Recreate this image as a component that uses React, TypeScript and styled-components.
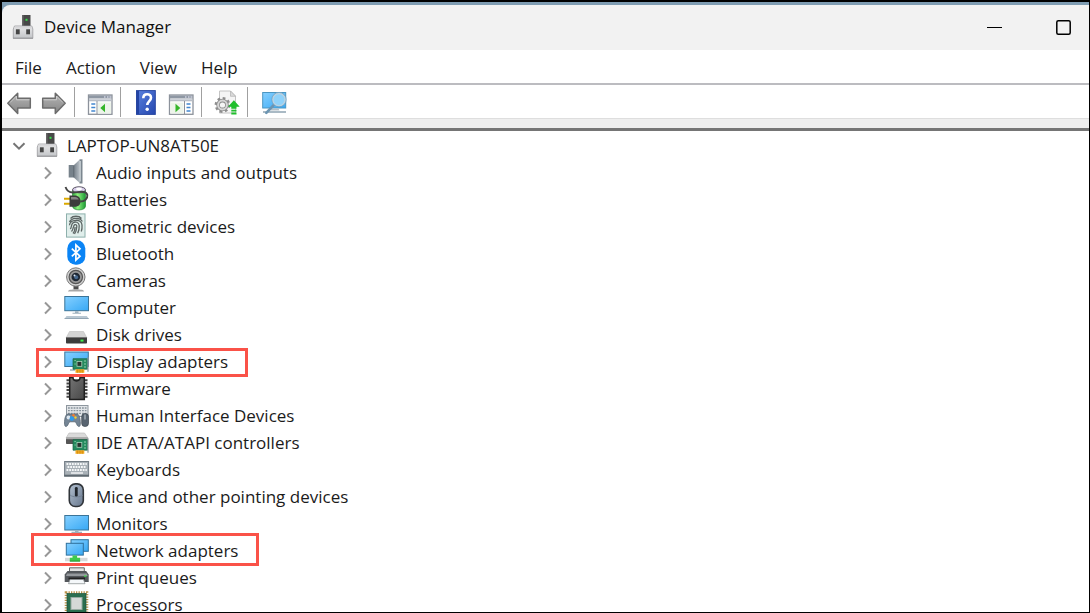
import React from 'react';
import styled, { createGlobalStyle } from 'styled-components';

const GlobalStyle = createGlobalStyle`
  *, *::before, *::after { box-sizing: border-box; }
  body { margin: 0; background: #000; }
  button { font: inherit; color: inherit; background: none; border: 0; padding: 0; }
`;

const Frame = styled.div`
  display: flex;
  flex-direction: column;
  height: 100vh;
  overflow: hidden;
  border: solid #000;
  border-width: 2px 1px 1px 2px;
  background: #7f9db3;
  padding-top: 3px;
  font-family: 'Open Sans', 'Noto Sans', sans-serif;
  font-size: 17px;
  line-height: 27px;
  color: #1b1b1b;
`;

const TitleBar = styled.header`
  display: flex;
  align-items: center;
  flex: none;
  height: 45px;
  padding-left: 8px;
  background: #f2f2f2;
  border-top-left-radius: 8px;
`;

const Title = styled.h1`
  flex: 1;
  margin: 0 0 2px 6px;
  font-size: 17px;
  font-weight: 400;
  line-height: 27px;
  color: #111;
`;

const WindowControls = styled.div`
  display: flex;
  gap: 19px;
`;

const WindowButton = styled.button`
  display: grid;
  place-items: center;
  width: 50px;
  height: 44px;
`;

const MenuBar = styled.nav`
  display: flex;
  flex: none;
  height: 33px;
  padding: 2px 1px 0;
  background: #fff;
`;

const MenuItem = styled.button`
  padding: 0 12px;
  height: 31px;
`;

const ToolBar = styled.div`
  display: flex;
  flex: none;
  gap: 1px;
  height: 35px;
  border-top: 2px solid #bcbcc0;
  background: #fff;
`;

const ToolButton = styled.button`
  display: grid;
  place-items: center;
  width: 34px;
  height: 33px;
`;

const Separator = styled.span`
  width: 1px;
  height: 30px;
  margin: 2px 7px 0 2px;
  background: #a0a0a0;
`;

const Rail = styled.div`
  flex: none;
  height: 13px;
  background: #eee;
  border-top: 1px solid #dedede;
  border-bottom: 3px solid #757575;
`;

const TreePane = styled.main`
  flex: 1;
  min-height: 0;
  overflow: hidden;
  padding-top: 1px;
  background: #fff;
`;

const Tree = styled.ul`
  list-style: none;
  margin: 0;
  padding: 0;
`;

const Row = styled.div<{ $level: number }>`
  position: relative;
  display: flex;
  height: 27px;
  padding-left: ${({ $level }) => 9 + $level * 29}px;
`;

const Expander = styled.button`
  display: grid;
  place-items: center;
  width: 16px;
  height: 28px;
  margin-right: 7px;
`;

const Label = styled.span`
  margin-left: 5px;
  white-space: nowrap;
`;

type Box = { left: number; top: number; width: number; height: number };

const Highlight = styled.span<{ $box: Box }>`
  position: absolute;
  left: ${({ $box }) => $box.left}px;
  top: ${({ $box }) => $box.top}px;
  width: ${({ $box }) => $box.width}px;
  height: ${({ $box }) => $box.height}px;
  border: 3px solid #fa5248;
  pointer-events: none;
  z-index: 1;
`;

const IconSvg = styled.svg`
  display: block;
  flex: none;
`;

const RowIcon = ({ children }: { children: React.ReactNode }) => (
  <IconSvg width="28" height="27" viewBox="0 0 28 27" aria-hidden="true">{children}</IconSvg>
);

const ToolIcon = ({ children }: { children: React.ReactNode }) => (
  <IconSvg width="28" height="33" viewBox="0 0 28 33" aria-hidden="true">{children}</IconSvg>
);

const Gradients = () => (
  <IconSvg width="0" height="0" aria-hidden="true">
    <defs>
      <linearGradient id="screen" x1="0" y1="0" x2="1" y2="1">
        <stop offset="0" stopColor="#86d0ff" /><stop offset="1" stopColor="#36a8f5" />
      </linearGradient>
      <linearGradient id="metal" x1="0" y1="0" x2="0" y2="1">
        <stop offset="0" stopColor="#e9e9ea" /><stop offset="1" stopColor="#c3c5c8" />
      </linearGradient>
      <linearGradient id="arrow" x1="0" y1="0" x2="0" y2="1">
        <stop offset="0" stopColor="#b5b5b5" /><stop offset="1" stopColor="#858585" />
      </linearGradient>
      <linearGradient id="cone" x1="0" y1="0" x2="1" y2="0">
        <stop offset="0" stopColor="#737d86" /><stop offset="1" stopColor="#b5bdc4" />
      </linearGradient>
      <linearGradient id="cell" x1="0" y1="0" x2="1" y2="0">
        <stop offset="0" stopColor="#2da83c" /><stop offset=".4" stopColor="#8ff07f" /><stop offset="1" stopColor="#1c9c34" />
      </linearGradient>
      <linearGradient id="help" x1="0" y1="0" x2="1" y2="1">
        <stop offset="0" stopColor="#5b82e0" /><stop offset="1" stopColor="#2446ae" />
      </linearGradient>
      <linearGradient id="mouse" x1="0" y1="0" x2="1" y2="1">
        <stop offset="0" stopColor="#b4c2d2" /><stop offset="1" stopColor="#66768c" />
      </linearGradient>
      <linearGradient id="chip" x1="0" y1="0" x2="1" y2="1">
        <stop offset="0" stopColor="#747474" /><stop offset="1" stopColor="#484848" />
      </linearGradient>
    </defs>
  </IconSvg>
);

const DeviceIcon = () => (
  <RowIcon>
    <rect x="12" y="1" width="8.500" height="11.500" fill="#484848" />
    <rect x="12" y="1" width="1.500" height="11.500" fill="#666" />
    <rect x="15.500" y="4.800" width="2" height="2" fill="#37e04a" />
    <path d="M4.500 12h17.300l1 3v9.300H3.300V15z" fill="url(#metal)" stroke="#9b9b9e" strokeWidth=".8" />
    <path d="M4.800 12.400h16.600l.8 2H3.900z" fill="#d8d8da" />
    <rect x="5.900" y="15.300" width="3.800" height="5" fill="#464646" />
    <rect x="16.200" y="15.300" width="3.800" height="5" fill="#464646" />
    <path d="M3 23.700h20v1H3z" fill="#98989b" />
  </RowIcon>
);

const AudioIcon = () => (
  <RowIcon>
    <rect x="5.700" y="6" width="5" height="12.500" fill="#77828b" />
    <path d="M10.500 6.500 16.500.8v23l-6-5.600z" fill="url(#cone)" />
    <path d="M16.500.3h3v24.200h-3z" fill="#7b868f" />
    <path d="M16.300 2h1.600v20.500h-1.600z" fill="#c5ccd1" />
    <path d="M10.700 6.500v11.800" stroke="#525e67" strokeWidth=".8" />
  </RowIcon>
);

const BatteryIcon = () => (
  <RowIcon>
    <path d="M9.500 4.500v15.500c0 5.200 13 5.200 13 0v-15.500z" fill="url(#cell)" stroke="#258a35" strokeWidth=".7" />
    <ellipse cx="16" cy="3.800" rx="6.500" ry="3" fill="#d7ccea" stroke="#55505e" />
    <ellipse cx="16" cy="3" rx="3" ry="1.400" fill="#fff" />
    <path d="M2.500 1c1.500 4.300 3.500 5.800 8 5.500 5-.3 13-2.500 13.800 2.500.5 4-2.800 6.500-7 6.500" fill="none" stroke="#444" strokeWidth="1.900" />
    <path d="M1 12.700h6.500M1 17.800h6.500" stroke="#dca900" strokeWidth="2" />
    <path d="M6.500 9.500h5c4 0 6 2.400 6 5.700s-2 5.500-6 5.500h-5z" fill="#3c3c3c" />
    <path d="M8 11h4c2 0 3.200 1 3.700 2.500H8z" fill="#858585" />
  </RowIcon>
);

const BiometricIcon = () => (
  <RowIcon>
    <rect x="3.500" y=".9" width="18.500" height="23.200" fill="#e0eeeb" stroke="#8db0ac" />
    <g fill="none" stroke="#5d6665" strokeWidth="1.300">
      <path d="M7.500 5.500c2.500-3 8.500-3 11 0M6.500 9c2-4.500 10.500-5 12.800-.5M6.500 12.300c.5-6.300 12-7 12.500-.3.200 2.800 0 4.500-.7 6.500" />
      <path d="M7.300 16c1.500-2 .8-4.500 2.500-6 2.300-2 6.200-.8 6.400 2.500.2 3-.3 5.300-1.500 7.800" />
      <path d="M8.500 18.500c2.300-2.500 1.500-6 3.300-6.800 1.400-.5 2.100.6 2 2-.2 3-.8 5-2.300 7.300M10 20.500c1.500-1.700 2-4 2.100-6.500" />
    </g>
  </RowIcon>
);

const BluetoothIcon = () => (
  <RowIcon>
    <rect x="4.300" y=".3" width="18" height="24.400" rx="8.300" fill="#0a84f5" />
    <path d="m8.800 8.600 8.200 7.600-4.100 3.900V4.900L17 8.800l-8.200 7.600" fill="none" stroke="#fff" strokeWidth="1.700" />
  </RowIcon>
);

const CameraIcon = () => (
  <RowIcon>
    <path d="M10.500 19h5v3.500h-5z" fill="#4d4d4d" />
    <path d="M5 24.500c0-1.800 3-2 8-2s8 .2 8 2z" fill="#a8a8a8" />
    <circle cx="12.800" cy="10" r="9.200" fill="#d2d2d2" stroke="#777" />
    <circle cx="12.800" cy="10" r="6.700" fill="#9a9a9a" stroke="#565656" strokeWidth="1.200" />
    <circle cx="12.800" cy="10" r="4.300" fill="#1e2733" />
    <circle cx="13.200" cy="10.200" r="2" fill="#47698f" />
    <circle cx="11.500" cy="8.500" r="1" fill="#dceaf7" />
  </RowIcon>
);

const ComputerIcon = () => (
  <RowIcon>
    <rect x="1.800" y="2.500" width="23.700" height="14.200" fill="url(#screen)" stroke="#3b7498" />
    <path d="M12 17.200h3.500v1.500H18v1H9.500v-1H12z" fill="#9fb1bd" />
    <path d="M3.500 22h20.300l1.700 2.500H1.800z" fill="#b9c8d3" />
    <path d="M1.500 24h24.200v.9H1.500z" fill="#8ba0af" />
  </RowIcon>
);

const DiskIcon = () => (
  <RowIcon>
    <path d="M6.500 10.500h14l3.500 6.500H3z" fill="#d4d4d4" stroke="#bdbdbd" strokeWidth=".6" />
    <rect x="3" y="16" width="21" height="6.500" rx=".8" fill="#3c3c3c" />
    <path d="M3 16h21v1H3z" fill="#777" />
    <rect x="17.500" y="18.600" width="3" height="2" fill="#3df04d" />
  </RowIcon>
);

const Board = () => (
  <>
    <path d="M10 10.700h14.500v10.500H10z" fill="#25895e" stroke="#146544" strokeWidth=".7" />
    <path d="M25 9.300v14.500" stroke="#8d979c" strokeWidth="1.200" />
    <rect x="14" y="13.500" width="4.800" height="4.800" fill="#26342e" stroke="#a9d3ba" strokeWidth=".8" />
    <path d="M11.500 12.500h1.200M11.500 16h1.200M21 13h2M21 16h2M21 19h2" stroke="#8fd0ac" />
    <path d="M12.500 21.300h8.800v3.500h-8.800z" fill="#f2a81e" />
    <path d="M14.600 21.500v3.300M17 21.500v3.300M19.300 21.500v3.300" stroke="#c98510" strokeWidth=".7" />
  </>
);

const DisplayIcon = () => (
  <RowIcon>
    <rect x="1.800" y="4" width="23.500" height="14.500" fill="url(#screen)" stroke="#3b7498" />
    <path d="M7 22h5" stroke="#9fb1bd" strokeWidth="1.500" />
    <Board />
  </RowIcon>
);

const FirmwareIcon = () => (
  <RowIcon>
    <path d="M3.500 5.200h21M3.500 8.500h21M3.500 11.800h21M3.500 15.100h21M3.500 18.400h21M3.500 21.700h21" stroke="#444" strokeWidth="2" />
    <path d="M6.700 2.500H10c0 4.500 7 4.500 7 0h4.300v22H6.700z" fill="url(#chip)" stroke="#202020" strokeWidth="1.500" />
  </RowIcon>
);

const HidIcon = () => (
  <RowIcon>
    <rect x="3.500" y="3.500" width="21.500" height="11" fill="#e2e5e8" stroke="#8d969e" />
    <path d="M5 6h18.500M5 8.700h18.500M5 11.400h18.500" stroke="#87929b" strokeWidth="1.300" strokeDasharray="1.800 1" />
    <path d="M5 12c-3 0-3.800 7-3.400 10.500.3 3 2.500 2.500 3.600-.2.800-1.800 1-2.500 2.500-2.500h3.500c1.500 0 1.700.7 2.500 2.500 1.200 2.700 3.300 3.200 3.600.2.300-3.500-.5-10.500-3.500-10.500z" fill="#758595" stroke="#4f5d6a" strokeWidth=".7" />
    <circle cx="5.500" cy="15.500" r="1.900" fill="#dde6ee" />
    <circle cx="10.500" cy="13.500" r="1.400" fill="#ef7c31" />
    <circle cx="12.500" cy="15.500" r="1.200" fill="#f3cf32" />
    <circle cx="8.800" cy="16.500" r="2.200" fill="#2b9cf0" />
    <rect x="18.700" y="11.500" width="6.800" height="13" rx="3.200" fill="#596571" stroke="#3c464f" strokeWidth=".7" />
    <path d="M22 12.500v5" stroke="#c8d1d8" />
  </RowIcon>
);

const IdeIcon = () => (
  <RowIcon>
    <path d="M6 4h15.500l3.500 5H3z" fill="#dadada" stroke="#b7b7b7" strokeWidth=".6" />
    <rect x="3" y="8.700" width="22" height="6.300" rx=".8" fill="#555" />
    <path d="M3 8.700h22v1.500H3z" fill="#a8a8a8" />
    <Board />
  </RowIcon>
);

const KeyboardIcon = () => (
  <RowIcon>
    <rect x="1.600" y="5.500" width="24" height="14.500" fill="#a9b1b7" stroke="#727c84" />
    <path d="M3.500 8h20.300M4.500 11h18.500M3.500 14h20.300" stroke="#f5f7f8" strokeWidth="1.800" strokeDasharray="1.800 .9" />
    <path d="M8 17h12" stroke="#f5f7f8" strokeWidth="1.400" />
    <path d="M1.200 18.700h24.800v1.900H1.200z" fill="#5f6971" />
  </RowIcon>
);

const MouseIcon = () => (
  <RowIcon>
    <rect x="6.300" y=".9" width="14" height="22.600" rx="6" fill="url(#mouse)" stroke="#303439" strokeWidth="1.600" />
    <path d="M7 12c3 2.500 10 2.500 13 0" fill="none" stroke="#6e7c8e" strokeWidth=".8" />
    <rect x="11.900" y="4" width="2.800" height="9.500" rx="1.300" fill="#20252b" />
  </RowIcon>
);

const MonitorIcon = () => (
  <RowIcon>
    <rect x="1.800" y="5.500" width="23.700" height="14.500" fill="url(#screen)" stroke="#3b7498" />
    <path d="M12 20.500h3.500v1.300H19V23H8.500v-1.200H12z" fill="#9fb1bd" />
  </RowIcon>
);

const NetworkIcon = () => (
  <RowIcon>
    <rect x="8" y="2.700" width="17.300" height="11.600" fill="url(#screen)" stroke="#2f709b" />
    <path d="M18 15v3" stroke="#9fb1bd" strokeWidth="2" />
    <rect x="3.300" y="6.300" width="17" height="11.800" fill="url(#screen)" stroke="#2f709b" />
    <path d="M2 20.800h22.500v3.500H2z" fill="#d6d9db" />
    <path d="M9.500 18.600h4.600v2.200h3v3.500H6.800v-3.500h2.700z" fill="#3fcb4d" />
    <path d="M6.800 23.600h10.300v1H6.800z" fill="#269534" />
  </RowIcon>
);

const PrinterIcon = () => (
  <RowIcon>
    <path d="M6.500 3.800h14.800v5H6.500z" fill="#e2e2e2" stroke="#666" />
    <path d="M4.500 7h18.700l2.500 3.500V18h-24v-7.500z" fill="#53575b" />
    <path d="M4 9.500h19.700l1 2.500H3z" fill="#94989c" />
    <path d="M5.500 13.500H22v2H5.500z" fill="#222" />
    <path d="M7 15.500h13.500L22 19.700H5.500z" fill="#f5f8fa" stroke="#84898d" strokeWidth=".7" />
    <rect x="21" y="11.500" width="2.500" height="1.200" fill="#3ce24b" />
  </RowIcon>
);

const ProcessorIcon = () => (
  <RowIcon>
    <rect x="3" y="1.500" width="21" height="22" fill="none" stroke="#b9924a" strokeWidth="2.600" strokeDasharray="1.300 1.200" />
    <rect x="4" y="2.500" width="19" height="20" fill="#2a6e4f" stroke="#1c543b" strokeWidth=".7" />
    <rect x="8" y="6.500" width="11" height="12" fill="#d5d9d7" stroke="#97aba1" />
  </RowIcon>
);

const BackIcon = () => (
  <ToolIcon>
    <path d="M2.800 18.300 12.700 8.300v5h12.600v9.700H12.700v5.400z" fill="url(#arrow)" stroke="#6c6c6c" strokeWidth="1.500" strokeLinejoin="round" />
    <path d="m5 17.500 6.500-6.500v3.800h13" fill="none" stroke="#d0d0d0" strokeWidth=".9" />
  </ToolIcon>
);

const ForwardIcon = () => (
  <ToolIcon>
    <path d="M25.200 18.300 15.300 8.300v5H2.700v9.700h12.600v5.400z" fill="url(#arrow)" stroke="#6c6c6c" strokeWidth="1.500" strokeLinejoin="round" />
    <path d="M3.500 14.800h13V11l6.500 6.500" fill="none" stroke="#d0d0d0" strokeWidth=".9" />
  </ToolIcon>
);

const PaneIcon = ({ side }: { side: 'left' | 'right' }) => (
  <ToolIcon>
    <rect x="2.500" y="10" width="23.500" height="19.300" fill="#fff" stroke="#8c929b" strokeWidth="1.300" />
    <path d="M3 10.500h22.500v3H3z" fill="#8e97a3" />
    <path d="M18 12h1.500M21 12h1.500M23.500 12H25" stroke="#eef" strokeWidth="1.200" />
    <path d="M3 15.300h22.500" stroke="#b8bec7" strokeWidth="2" />
    {side === 'left' ? (
      <>
        <path d="M11 16v13" stroke="#8c929b" />
        <path d="M5.300 19h4M5.300 22.500h4M5.300 26h4" stroke="#4187cf" strokeWidth="1.500" />
        <rect x="12" y="17.500" width="13" height="11" fill="#edf4ea" />
        <path d="M19 18.800v8.400L14.300 23z" fill="#35b52a" />
      </>
    ) : (
      <>
        <path d="M17.500 16v13" stroke="#8c929b" />
        <path d="M19.500 19h4M19.500 22.500h4M19.500 26h4" stroke="#4187cf" strokeWidth="1.500" />
        <rect x="3.500" y="17.500" width="13" height="11" fill="#edf4ea" />
        <path d="M8.500 18.800v8.400L13.300 23z" fill="#35b52a" />
      </>
    )}
  </ToolIcon>
);

const HelpIcon = () => (
  <ToolIcon>
    <rect x="4.500" y="5.600" width="18.800" height="23.800" fill="url(#help)" stroke="#2847a2" />
    <path d="M5 6h2v23H5z" fill="#2344a4" />
    <path d="M11.300 13.300c0-5.600 7.700-5.100 7.700-.6 0 3.300-3.700 3.500-3.700 7.400" fill="none" stroke="#fff" strokeWidth="2.600" />
    <circle cx="15.200" cy="24.200" r="1.700" fill="#fff" />
  </ToolIcon>
);

const UpdateIcon = () => (
  <ToolIcon>
    <path d="M6.500 6h11l5 5v17H6.500z" fill="#f5f5f5" stroke="#c4c4c4" />
    <path d="M17.500 6v5.300h5z" fill="#dadada" stroke="#b1b1b1" strokeWidth=".7" />
    <circle cx="9.500" cy="20" r="6.700" fill="none" stroke="#8d8d8d" strokeWidth="2.400" strokeDasharray="2.700 2.560" />
    <circle cx="9.500" cy="20" r="4.400" fill="#f5f5f5" stroke="#8d8d8d" strokeWidth="3.600" />
    <circle cx="9.500" cy="20" r="4.400" fill="none" stroke="#d6d6d6" strokeWidth="2" />
    <path d="m20.900 15.200 5.800 6.500h-3.200v2h-5.200v-2H15z" fill="#20bf2d" />
    <path d="M18.300 24.700h5.200v1.800h-5.200zM18.300 27.600h5.200v1.800h-5.200z" fill="#20bf2d" />
  </ToolIcon>
);

const ScanIcon = () => (
  <ToolIcon>
    <rect x="3.700" y="7.500" width="23" height="15.500" fill="url(#screen)" stroke="#4a96c2" />
    <path d="M12.500 23.500h7l1 2h-9z" fill="#b4c0c8" />
    <path d="M4 27h23" stroke="#8ea3b2" strokeWidth="1.500" />
    <path d="m15.300 19.500-8 8.300" stroke="#6c95b2" strokeWidth="2.600" strokeLinecap="round" />
    <circle cx="20" cy="14.600" r="6.300" fill="#8fd2fa" stroke="#b9d3e3" strokeWidth="1.900" />
    <circle cx="20" cy="14.600" r="7.200" fill="none" stroke="#5f93b5" strokeWidth=".6" />
  </ToolIcon>
);

const Chevron = ({ open }: { open?: boolean }) => (
  <IconSvg width="14" height="14" viewBox="0 0 14 14" fill="none" stroke={open ? '#757575' : '#979797'} strokeWidth="2" aria-hidden="true">
    <path d={open ? 'M1.500 4.200L7 9.700l5.500-5.500' : 'M4 1.500L9.500 7 4 12.500'} />
  </IconSvg>
);

type Category = { name: string; Icon: React.FC; box?: Box };

const categories: Category[] = [
  { name: 'Audio inputs and outputs', Icon: AudioIcon },
  { name: 'Batteries', Icon: BatteryIcon },
  { name: 'Biometric devices', Icon: BiometricIcon },
  { name: 'Bluetooth', Icon: BluetoothIcon },
  { name: 'Cameras', Icon: CameraIcon },
  { name: 'Computer', Icon: ComputerIcon },
  { name: 'Disk drives', Icon: DiskIcon },
  { name: 'Display adapters', Icon: DisplayIcon, box: { left: 34, top: 0, width: 212, height: 29 } },
  { name: 'Firmware', Icon: FirmwareIcon },
  { name: 'Human Interface Devices', Icon: HidIcon },
  { name: 'IDE ATA/ATAPI controllers', Icon: IdeIcon },
  { name: 'Keyboards', Icon: KeyboardIcon },
  { name: 'Mice and other pointing devices', Icon: MouseIcon },
  { name: 'Monitors', Icon: MonitorIcon },
  { name: 'Network adapters', Icon: NetworkIcon, box: { left: 29, top: -4, width: 228, height: 33 } },
  { name: 'Print queues', Icon: PrinterIcon },
  { name: 'Processors', Icon: ProcessorIcon },
];

export default function App() {
  return (
    <Frame>
      <GlobalStyle />
      <Gradients />
      <TitleBar>
        <DeviceIcon />
        <Title>Device Manager</Title>
        <WindowControls>
          <WindowButton aria-label="Minimize">
            <IconSvg width="16" height="16" viewBox="0 0 16 16"><path d="M0 7.500h15" stroke="#000" /></IconSvg>
          </WindowButton>
          <WindowButton aria-label="Maximize">
            <IconSvg width="16" height="16" viewBox="0 0 16 16">
              <rect x=".8" y=".8" width="13.400" height="13.400" rx="1.500" fill="none" stroke="#000" strokeWidth="1.500" />
            </IconSvg>
          </WindowButton>
        </WindowControls>
      </TitleBar>
      <MenuBar>
        {['File', 'Action', 'View', 'Help'].map((name) => <MenuItem key={name}>{name}</MenuItem>)}
      </MenuBar>
      <ToolBar>
        <ToolButton aria-label="Back"><BackIcon /></ToolButton>
        <ToolButton aria-label="Forward"><ForwardIcon /></ToolButton>
        <Separator />
        <ToolButton aria-label="Show console tree"><PaneIcon side="left" /></ToolButton>
        <Separator />
        <ToolButton aria-label="Help topics"><HelpIcon /></ToolButton>
        <ToolButton aria-label="Show action pane"><PaneIcon side="right" /></ToolButton>
        <Separator />
        <ToolButton aria-label="Update driver"><UpdateIcon /></ToolButton>
        <Separator />
        <ToolButton aria-label="Scan for hardware changes"><ScanIcon /></ToolButton>
      </ToolBar>
      <Rail />
      <TreePane>
        <Tree>
          <li>
            <Row $level={0}>
              <Expander aria-label="Collapse LAPTOP-UN8AT50E" aria-expanded="true"><Chevron open /></Expander>
              <DeviceIcon />
              <Label>LAPTOP-UN8AT50E</Label>
            </Row>
            <Tree>
              {categories.map(({ name, Icon, box }) => (
                <li key={name}>
                  <Row $level={1}>
                    <Expander aria-label={`Expand ${name}`} aria-expanded="false"><Chevron /></Expander>
                    <Icon />
                    <Label>{name}</Label>
                    {box && <Highlight $box={box} />}
                  </Row>
                </li>
              ))}
            </Tree>
          </li>
        </Tree>
      </TreePane>
    </Frame>
  );
}
